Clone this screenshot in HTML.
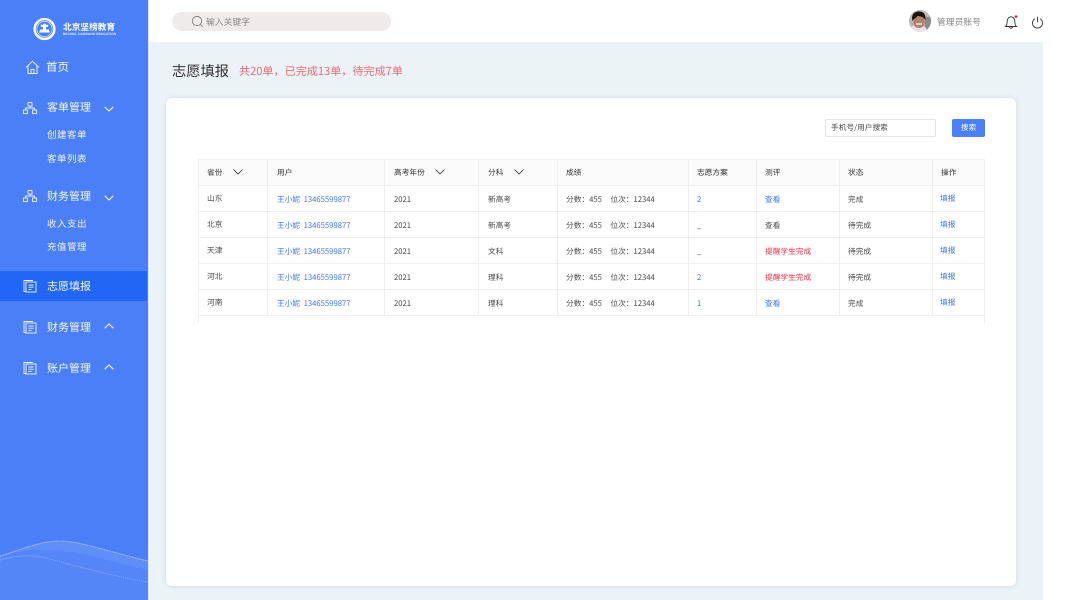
<!DOCTYPE html>
<html lang="zh"><head><meta charset="utf-8"><title>志愿填报</title>
<style>
html,body{margin:0;padding:0;background:#fff}
body{width:1067px;height:600px;position:relative;overflow:hidden;font-family:"Noto Sans CJK SC","Liberation Sans",sans-serif;color:#444;text-rendering:geometricPrecision}
.a{position:absolute;white-space:nowrap}
#side{position:absolute;left:0;top:0;width:148px;height:599.5px;background:#4a7ff7}
#content{position:absolute;left:149px;top:42px;width:894px;height:557.5px;background:#ebf3f6}
#card{position:absolute;left:166px;top:98px;width:850px;height:488px;background:#fff;border-radius:6px;box-shadow:0 0 6px rgba(170,190,195,.45)}
.m{color:#f2f6ff;font-size:11px;line-height:16px}
.s{color:#eef3ff;font-size:9.5px;line-height:14px;letter-spacing:.5px}
.t{font-size:7.7px;line-height:12px;color:#4a4a4a}
.t i{font-style:normal;margin-left:8.5px}
.t u{text-decoration:none;margin-left:3.5px}
.h{color:#333}
.b{color:#3f74ee}
.r{color:#f0334f}
.l{position:absolute;background:#efefef}
svg{position:absolute;overflow:visible}
</style></head><body>
<div id="side"></div>
<div class="a" style="left:148px;top:0;width:1px;height:600px;background:#dfe8fb"></div>
<div id="content"></div>
<div id="card"></div>

<!-- logo -->
<svg style="left:33px;top:18px" width="23" height="22" viewBox="0 0 23 22"><circle cx="11.5" cy="11" r="9.9" fill="none" stroke="#fff" stroke-width="2.4"/><circle cx="11.5" cy="11" r="7.6" fill="#4a7ff7" stroke="#e8effe" stroke-width=".7"/><path d="M11.5 5.200l2 1.800 2-.5-.8 2.500h-1.700v2.500h3v1l1 2h-11l1-2v-1h3V9h-1.700l-.8-2.500 2 .5z" fill="#fff"/></svg>
<div class="a" style="left:63px;top:19.500px;font-size:8.700px;line-height:13px;color:#fff;font-weight:700">北京坚榜教育</div>
<div class="a" style="left:63px;top:31.500px;font-size:3.200px;line-height:4px;color:#eaf0ff;letter-spacing:.13px;font-family:'Liberation Sans',sans-serif;font-weight:700">BEIJING JIANBANG EDUCATION</div>

<!-- menu -->
<svg style="left:25px;top:60px" width="15" height="15" viewBox="0 0 15 15" fill="none" stroke="#f2f6ff" stroke-width=".9"><path d="M1 7.500L7.500 1.200 14 7.500M3 6v7.500h9V6M6 13.500V9.500h3v4"/></svg>
<div class="a m" style="left:46px;top:58.500px;font-size:11.500px">首页</div>

<svg style="left:23px;top:102px" width="14" height="12" viewBox="0 0 14 12" fill="none" stroke="#f2f6ff" stroke-width=".9"><rect x="5" y=".5" width="4" height="3.500"/><rect x=".5" y="8" width="4" height="3.500"/><rect x="9.500" y="8" width="4" height="3.500"/><path d="M7 4v2M2.500 8V6h9v2"/></svg>
<div class="a m" style="left:47px;top:98.500px">客单管理</div>
<svg style="left:104px;top:106px" width="10" height="6" viewBox="0 0 10 6" fill="none" stroke="#f2f6ff" stroke-width="1.100"><path d="M.7.800L5 5 9.300.8"/></svg>
<div class="a s" style="left:47px;top:126.500px">创建客单</div>
<div class="a s" style="left:47px;top:151px">客单列表</div>

<svg style="left:23px;top:190px" width="14" height="12" viewBox="0 0 14 12" fill="none" stroke="#f2f6ff" stroke-width=".9"><rect x="5" y=".5" width="4" height="3.500"/><rect x=".5" y="8" width="4" height="3.500"/><rect x="9.500" y="8" width="4" height="3.500"/><path d="M7 4v2M2.500 8V6h9v2"/></svg>
<div class="a m" style="left:47px;top:188px">财务管理</div>
<svg style="left:104px;top:195px" width="10" height="6" viewBox="0 0 10 6" fill="none" stroke="#f2f6ff" stroke-width="1.100"><path d="M.7.800L5 5 9.300.8"/></svg>
<div class="a s" style="left:47px;top:216px">收入支出</div>
<div class="a s" style="left:47px;top:239px">充值管理</div>

<div class="a" style="left:0;top:271px;width:147px;height:30px;background:#2266f6"></div>
<svg style="left:23px;top:279px" width="14" height="14" viewBox="0 0 14 14" fill="none" stroke="#f2f6ff" stroke-width=".9"><path d="M2.500 12.500H1V1.500h9"/><rect x="3" y="3" width="10" height="10"/><path d="M5.500 6h5M5.500 8.200h5M5.500 10.400h3"/></svg>
<div class="a m" style="left:47px;top:277.500px">志愿填报</div>

<svg style="left:23px;top:320px" width="14" height="14" viewBox="0 0 14 14" fill="none" stroke="#f2f6ff" stroke-width=".9"><path d="M2.500 12.500H1V1.500h9"/><rect x="3" y="3" width="10" height="10"/><path d="M5.500 6h5M5.500 8.200h5M5.500 10.400h3"/></svg>
<div class="a m" style="left:47px;top:319px">财务管理</div>
<svg style="left:104px;top:323px" width="10" height="6" viewBox="0 0 10 6" fill="none" stroke="#f2f6ff" stroke-width="1.100"><path d="M.7 5.200L5 1 9.300 5.200"/></svg>

<svg style="left:23px;top:361px" width="14" height="14" viewBox="0 0 14 14" fill="none" stroke="#f2f6ff" stroke-width=".9"><path d="M2.500 12.500H1V1.500h9"/><rect x="3" y="3" width="10" height="10"/><path d="M5.500 6h5M5.500 8.200h5M5.500 10.400h3"/></svg>
<div class="a m" style="left:47px;top:360px">账户管理</div>
<svg style="left:104px;top:364px" width="10" height="6" viewBox="0 0 10 6" fill="none" stroke="#f2f6ff" stroke-width="1.100"><path d="M.7 5.200L5 1 9.300 5.200"/></svg>

<!-- wave -->
<svg style="left:0;top:530px;overflow:hidden" width="148" height="69.500" viewBox="0 0 148 69.500">
<defs><pattern id="d" width="2" height="2" patternUnits="userSpaceOnUse"><rect x=".5" y=".5" width="1" height="1" fill="#fff"/></pattern></defs>
<path d="M0 26C20 20 40 11 60 11S110 22 148 31V70H0Z" fill="url(#d)" opacity=".22"/>
<path d="M0 26C20 20 40 11 60 11S110 22 148 31V40C110 32 80 20 46 20S14 24 0 28Z" fill="url(#d)" opacity=".3"/>
<path d="M0 26C20 20 40 11 60 11S110 22 148 31" fill="none" stroke="#dbe6fe" stroke-width="1" stroke-dasharray="1 .6" opacity=".65"/>
<path d="M0 30C14 26 30 24 46 28S110 46 148 52" fill="none" stroke="#dbe6fe" stroke-width="1" stroke-dasharray="1 1" opacity=".4"/>
</svg>

<!-- top bar -->
<div class="a" style="left:172px;top:12px;width:219px;height:19px;border-radius:10px;background:#efebeb"></div>
<svg style="left:191px;top:15px" width="13" height="13" viewBox="0 0 13 13" fill="none" stroke="#777" stroke-width=".8"><circle cx="6" cy="6" r="4.700"/><path d="M9.500 9.500l2.500 2.500"/></svg>
<div class="a" style="left:206px;top:15px;font-size:8.800px;line-height:13px;color:#888">输入关键字</div>

<svg style="left:909px;top:10px" width="22" height="22" viewBox="0 0 22 22"><defs><clipPath id="c"><circle cx="11" cy="11" r="11"/></clipPath></defs><g clip-path="url(#c)"><rect width="22" height="22" fill="#b9b9b9"/><rect x="16" y="7" width="6" height="13" fill="#8a8a8a"/><path d="M0 22c0-5 4-7 9-7s9 2 9 7z" fill="#e4e4ea"/><path d="M4.500 9c0-4 2-6 5.500-6s5.500 2 5.500 6v4c0 3-2.500 5-5.500 5s-5.500-2-5.500-5z" fill="#b57f68"/><path d="M3.500 11C2 5 5 1.500 10 1.500s7 3.500 6.500 8.500c-2-3-5-4-8-4-1 1.500-3.500 2.500-5 5z" fill="#17130f"/><path d="M7 14h6" stroke="#fff" stroke-width="1.200"/></g></svg>
<div class="a" style="left:937px;top:15px;font-size:8.800px;line-height:13px;color:#888">管理员账号</div>

<svg style="left:1004px;top:14px" width="15" height="15" viewBox="0 0 15 15" fill="none" stroke="#333" stroke-width=".9"><path d="M1.500 12.500c1.200-1 1.600-2 1.600-4.500 0-3 1.600-5.200 3.900-5.200s3.900 2.200 3.900 5.200c0 2.500.4 3.500 1.600 4.500zM5.500 12.500c0 1 .7 1.700 1.500 1.700s1.500-.7 1.500-1.700"/><circle cx="12" cy="2.500" r="1.300" fill="#f0141e" stroke="none"/></svg>
<svg style="left:1031px;top:16px" width="13" height="13" viewBox="0 0 13 13" fill="none" stroke="#333" stroke-width=".9"><path d="M3.800 2.800a5 5 0 1 0 5.400 0M6.500 .8v5.500"/></svg>

<!-- title -->
<div class="a" style="left:172px;top:61px;font-size:14.250px;line-height:20px;color:#333">志愿填报</div>
<div class="a" style="left:239px;top:63px;font-size:11.100px;line-height:16px;color:#ef6a78">共20单，已完成13单，待完成7单</div>

<!-- search -->
<div class="a" style="left:825px;top:119px;width:109px;height:16px;border:1px solid #e4e4e4;border-radius:2px;background:#fff"></div>
<div class="a t" style="left:831px;top:122px;color:#444">手机号/用户搜索</div>
<div class="a" style="left:952px;top:119px;width:33px;height:17.500px;border-radius:2px;background:#4a7ff7;color:#fff;font-size:7.700px;line-height:18px;text-align:center">搜索</div>

<!-- table -->
<div class="a" style="left:198px;top:159px;width:787px;height:26px;background:#fafafa"></div>
<div class="l" style="left:198px;top:159px;width:787px;height:1px"></div>
<div class="l" style="left:198px;top:185px;width:787px;height:1px"></div>
<div class="l" style="left:198px;top:211px;width:787px;height:1px"></div>
<div class="l" style="left:198px;top:237px;width:787px;height:1px"></div>
<div class="l" style="left:198px;top:263px;width:787px;height:1px"></div>
<div class="l" style="left:198px;top:289px;width:787px;height:1px"></div>
<div class="l" style="left:198px;top:315px;width:787px;height:1px"></div>
<div class="l" style="left:198px;top:159px;width:1px;height:164px"></div>
<div class="l" style="left:267px;top:159px;width:1px;height:157px"></div>
<div class="l" style="left:384px;top:159px;width:1px;height:157px"></div>
<div class="l" style="left:478px;top:159px;width:1px;height:157px"></div>
<div class="l" style="left:557px;top:159px;width:1px;height:157px"></div>
<div class="l" style="left:688px;top:159px;width:1px;height:157px"></div>
<div class="l" style="left:756px;top:159px;width:1px;height:157px"></div>
<div class="l" style="left:839px;top:159px;width:1px;height:157px"></div>
<div class="l" style="left:932px;top:159px;width:1px;height:157px"></div>
<div class="l" style="left:984px;top:159px;width:1px;height:164px"></div>

<div class="a t h" style="left:207px;top:166.500px">省份</div>
<svg style="left:233px;top:169px" width="10" height="6" viewBox="0 0 10 6" fill="none" stroke="#333" stroke-width=".8"><path d="M.5.500L5 5 9.500.5"/></svg>
<div class="a t h" style="left:277px;top:166.500px">用户</div>
<div class="a t h" style="left:394px;top:166.500px">高考年份</div>
<svg style="left:435px;top:169px" width="10" height="6" viewBox="0 0 10 6" fill="none" stroke="#333" stroke-width=".8"><path d="M.5.500L5 5 9.500.5"/></svg>
<div class="a t h" style="left:488px;top:166.500px">分科</div>
<svg style="left:514px;top:169px" width="10" height="6" viewBox="0 0 10 6" fill="none" stroke="#333" stroke-width=".8"><path d="M.5.500L5 5 9.500.5"/></svg>
<div class="a t h" style="left:566px;top:166.500px">成绩</div>
<div class="a t h" style="left:697px;top:166.500px">志愿方案</div>
<div class="a t h" style="left:765px;top:166.500px">测评</div>
<div class="a t h" style="left:848px;top:166.500px">状态</div>
<div class="a t h" style="left:941px;top:166.500px">操作</div>

<!-- row 1 -->
<div class="a t" style="left:207px;top:193px">山东</div>
<div class="a t b" style="left:277px;top:194px">王小妮<u>13465599877</u></div>
<div class="a t" style="left:394px;top:194px">2021</div>
<div class="a t" style="left:488px;top:194px">新高考</div>
<div class="a t" style="left:566px;top:194px">分数：455<i>位次：12344</i></div>
<div class="a t b" style="left:697px;top:194px">2</div>
<div class="a t b" style="left:765px;top:194px">查看</div>
<div class="a t" style="left:848px;top:194px">完成</div>
<div class="a t b" style="left:940px;top:193px">填报</div>
<!-- row 2 -->
<div class="a t" style="left:207px;top:219px">北京</div>
<div class="a t b" style="left:277px;top:220px">王小妮<u>13465599877</u></div>
<div class="a t" style="left:394px;top:220px">2021</div>
<div class="a t" style="left:488px;top:220px">新高考</div>
<div class="a t" style="left:566px;top:220px">分数：455<i>位次：12344</i></div>
<div class="a t" style="left:697px;top:220px">_</div>
<div class="a t" style="left:765px;top:220px">查看</div>
<div class="a t" style="left:848px;top:220px">待完成</div>
<div class="a t b" style="left:940px;top:219px">填报</div>
<!-- row 3 -->
<div class="a t" style="left:207px;top:245px">天津</div>
<div class="a t b" style="left:277px;top:246px">王小妮<u>13465599877</u></div>
<div class="a t" style="left:394px;top:246px">2021</div>
<div class="a t" style="left:488px;top:246px">文科</div>
<div class="a t" style="left:566px;top:246px">分数：455<i>位次：12344</i></div>
<div class="a t" style="left:697px;top:246px">_</div>
<div class="a t r" style="left:765px;top:246px">提醒学生完成</div>
<div class="a t" style="left:848px;top:246px">待完成</div>
<div class="a t b" style="left:940px;top:245px">填报</div>
<!-- row 4 -->
<div class="a t" style="left:207px;top:271px">河北</div>
<div class="a t b" style="left:277px;top:272px">王小妮<u>13465599877</u></div>
<div class="a t" style="left:394px;top:272px">2021</div>
<div class="a t" style="left:488px;top:272px">理科</div>
<div class="a t" style="left:566px;top:272px">分数：455<i>位次：12344</i></div>
<div class="a t b" style="left:697px;top:272px">2</div>
<div class="a t r" style="left:765px;top:272px">提醒学生完成</div>
<div class="a t" style="left:848px;top:272px">待完成</div>
<div class="a t b" style="left:940px;top:271px">填报</div>
<!-- row 5 -->
<div class="a t" style="left:207px;top:297px">河南</div>
<div class="a t b" style="left:277px;top:298px">王小妮<u>13465599877</u></div>
<div class="a t" style="left:394px;top:298px">2021</div>
<div class="a t" style="left:488px;top:298px">理科</div>
<div class="a t" style="left:566px;top:298px">分数：455<i>位次：12344</i></div>
<div class="a t b" style="left:697px;top:298px">1</div>
<div class="a t b" style="left:765px;top:298px">查看</div>
<div class="a t" style="left:848px;top:298px">完成</div>
<div class="a t b" style="left:940px;top:297px">填报</div>
</body></html>
